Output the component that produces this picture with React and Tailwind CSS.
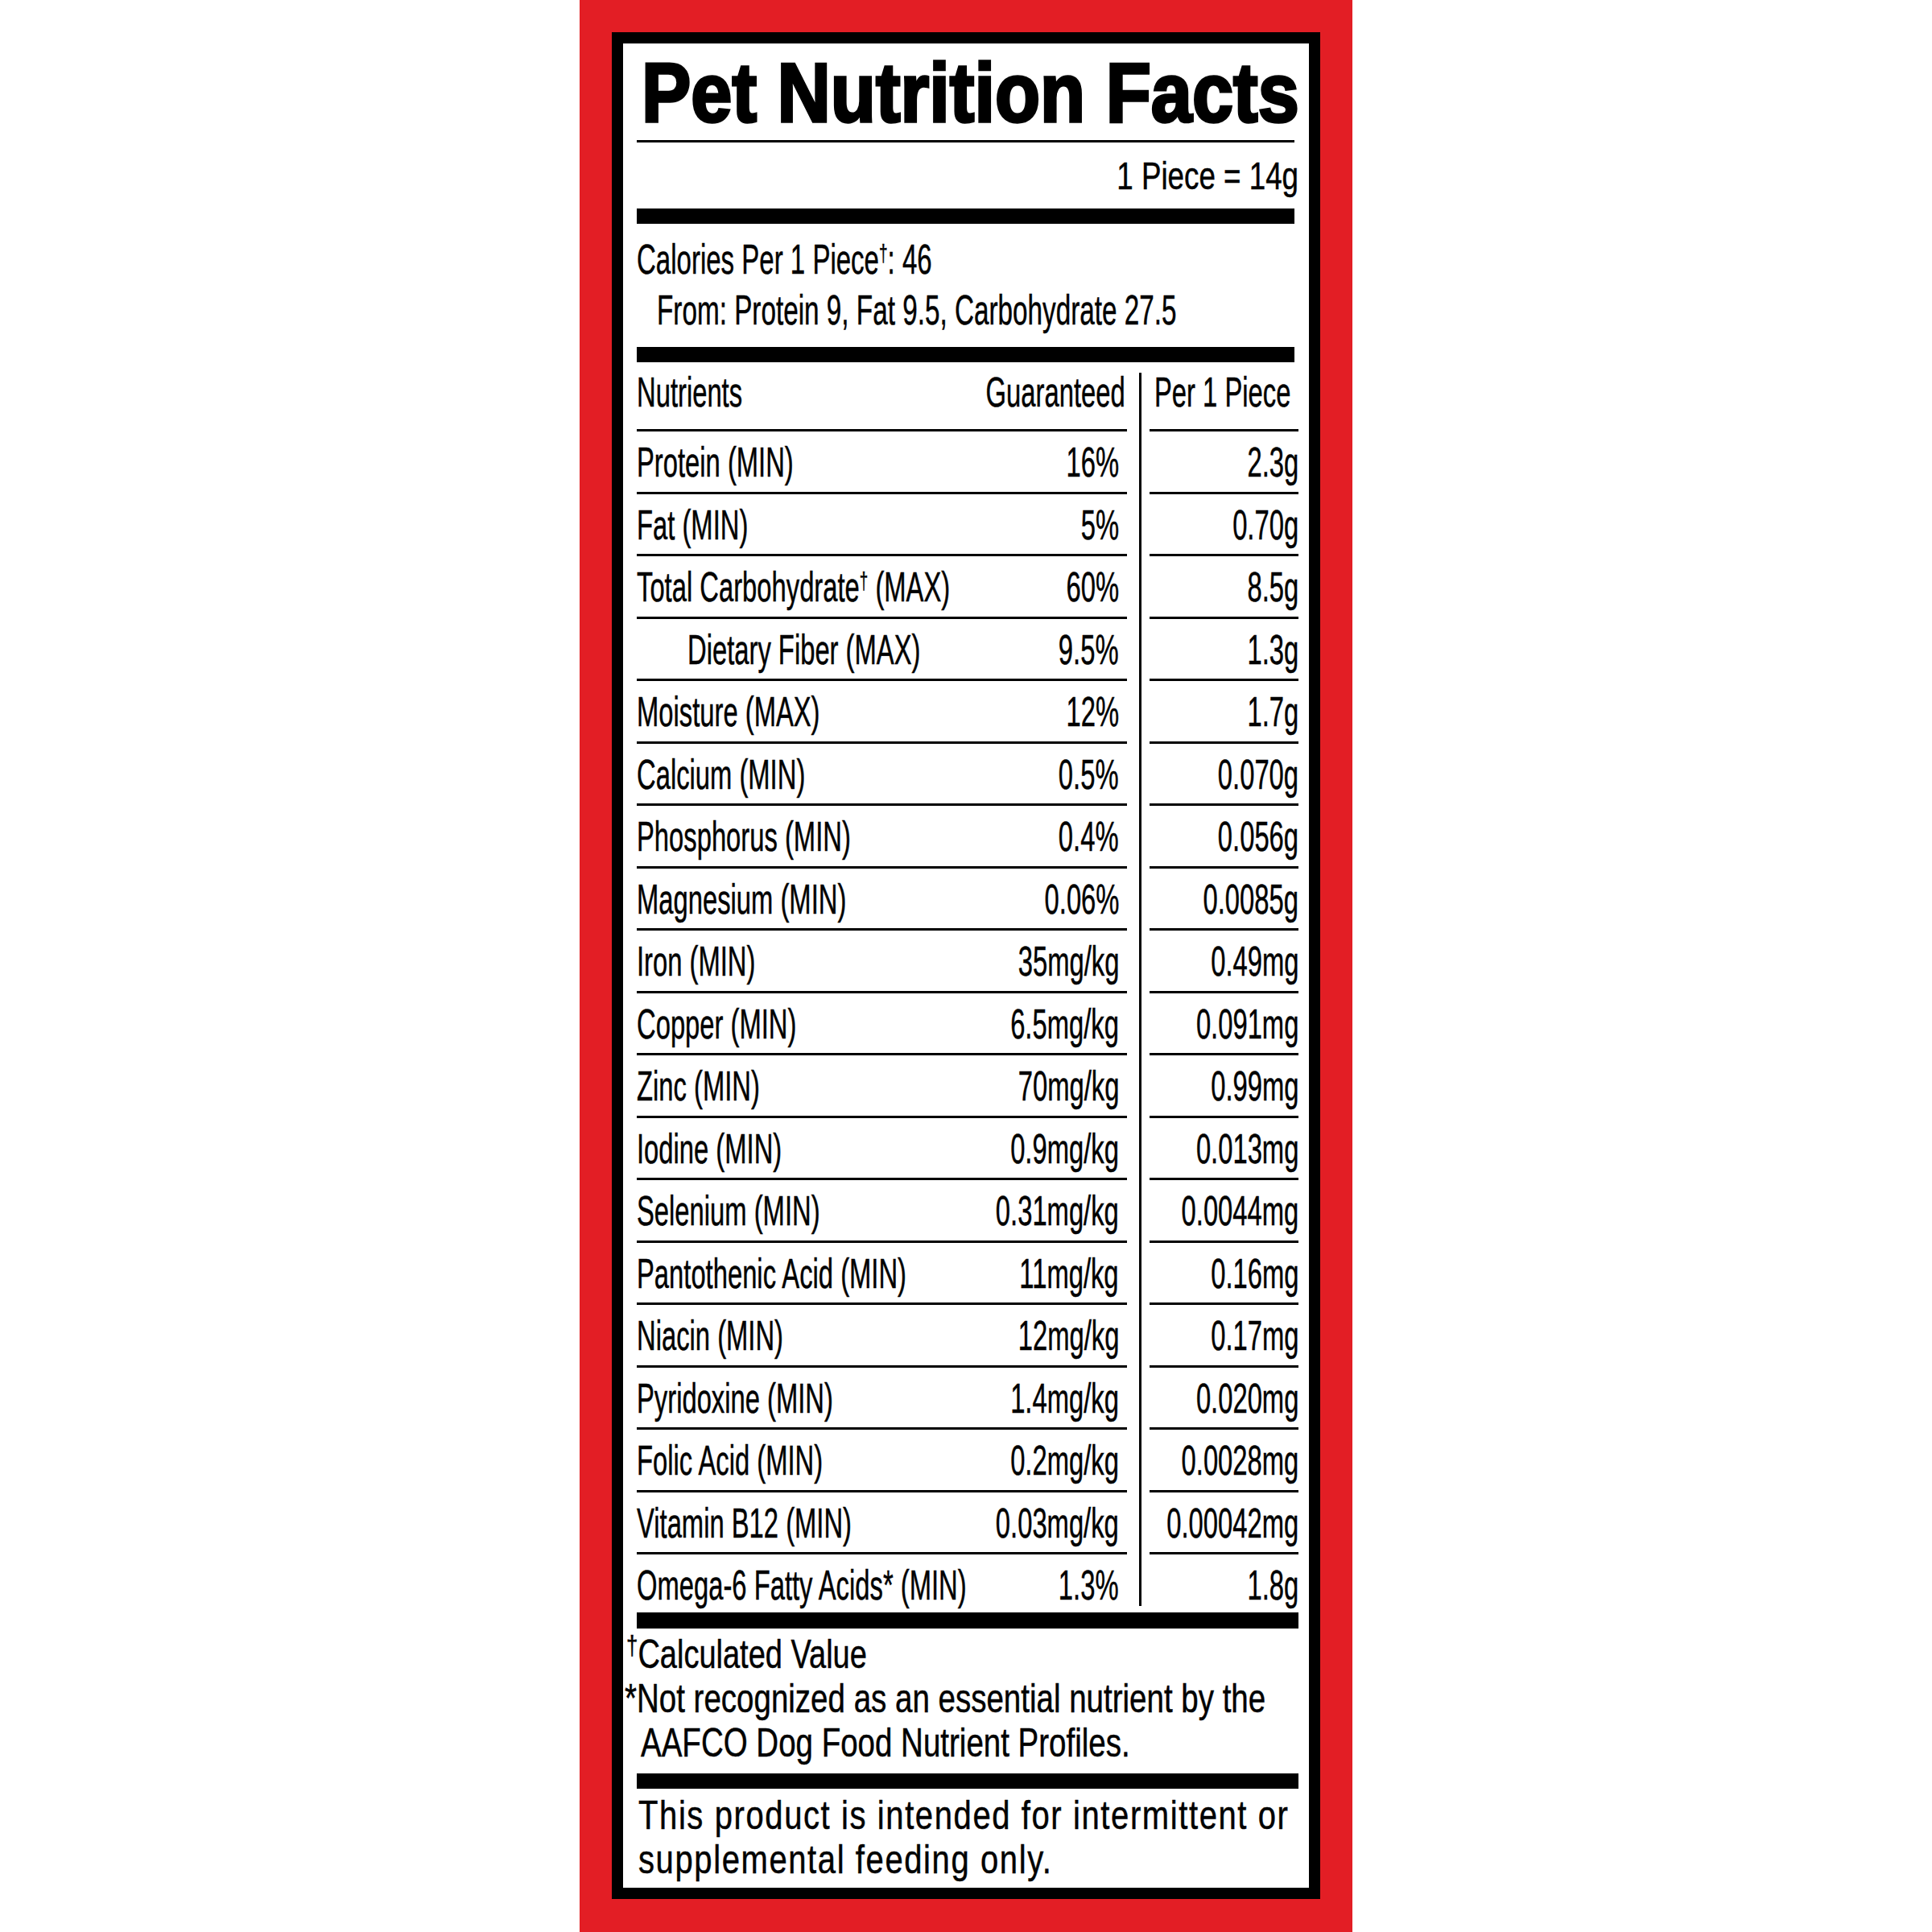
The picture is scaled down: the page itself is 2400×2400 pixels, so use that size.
import React from "react";

const rows = [
  ["Protein (MIN)", "16%", "2.3g"],
  ["Fat (MIN)", "5%", "0.70g"],
  ["Total Carbohydrate", "60%", "8.5g", "dagger"],
  ["Dietary Fiber (MAX)", "9.5%", "1.3g", "indent"],
  ["Moisture (MAX)", "12%", "1.7g"],
  ["Calcium (MIN)", "0.5%", "0.070g"],
  ["Phosphorus (MIN)", "0.4%", "0.056g"],
  ["Magnesium (MIN)", "0.06%", "0.0085g"],
  ["Iron (MIN)", "35mg/kg", "0.49mg"],
  ["Copper (MIN)", "6.5mg/kg", "0.091mg"],
  ["Zinc (MIN)", "70mg/kg", "0.99mg"],
  ["Iodine (MIN)", "0.9mg/kg", "0.013mg"],
  ["Selenium (MIN)", "0.31mg/kg", "0.0044mg"],
  ["Pantothenic Acid (MIN)", "11mg/kg", "0.16mg"],
  ["Niacin (MIN)", "12mg/kg", "0.17mg"],
  ["Pyridoxine (MIN)", "1.4mg/kg", "0.020mg"],
  ["Folic Acid (MIN)", "0.2mg/kg", "0.0028mg"],
  ["Vitamin B12 (MIN)", "0.03mg/kg", "0.00042mg"],
];

function Lt({ children }) {
  return (
    <span className="inline-block whitespace-nowrap origin-left scale-x-[0.63] [-webkit-text-stroke:0.5px_black]">
      {children}
    </span>
  );
}

function Rt({ children }) {
  return (
    <span className="inline-block whitespace-nowrap origin-right scale-x-[0.63] [-webkit-text-stroke:0.5px_black]">
      {children}
    </span>
  );
}

function Label({ row }) {
  const [name, , , kind] = row;
  if (kind === "dagger") {
    return (
      <Lt>
        Total Carbohydrate<sup className="text-[30px]">†</sup> (MAX)
      </Lt>
    );
  }
  return <Lt>{name}</Lt>;
}

function DataRow({ row }) {
  const indent = row[3] === "indent";
  return (
    <div className="flex h-[77.5px]">
      <div className="w-[609px] flex flex-col">
        <div className="flex-1 flex pt-[12px] leading-[52px]">
          <div className={indent ? "flex-1 min-w-0 pl-[63px]" : "flex-1 min-w-0"}>
            <Label row={row} />
          </div>
          <div className="w-[230px] flex justify-end pr-[10px]">
            <Rt>{row[1]}</Rt>
          </div>
        </div>
        <div className="h-[3px] bg-black" />
      </div>
      <div className="w-[28px] pl-[15px] flex">
        <div className="w-[3px] h-full bg-black" />
      </div>
      <div className="w-[185px] flex flex-col">
        <div className="flex-1 flex justify-end pt-[12px] leading-[52px]">
          <Rt>{row[2]}</Rt>
        </div>
        <div className="h-[3px] bg-black" />
      </div>
    </div>
  );
}

export default function App() {
  return (
    <div className="w-full h-[2400px] bg-white flex justify-center font-['Liberation_Sans',Arial,sans-serif] text-black">
      <div className="w-[960px] h-[2400px] bg-[#e31e25] px-[40px] pt-[40px]">
        <div className="h-[2319px] border-[14px] border-black bg-white pl-[17px] pr-[13px]">
          {/* Title */}
          <div className="pt-[10px] pl-[6px] text-[103px] leading-[103px] font-bold">
            <span className="inline-block whitespace-nowrap origin-left scale-x-[0.892] [-webkit-text-stroke:3.5px_black]">
              Pet Nutrition Facts
            </span>
          </div>
          <div className="mt-[7px] mr-[5px] h-[3px] bg-black" />

          {/* Serving size */}
          <div className="mt-[16.5px] flex justify-end text-[49px] leading-[49px]">
            <span className="inline-block whitespace-nowrap origin-right scale-x-[0.75] [-webkit-text-stroke:0.5px_black]">
              1 Piece = 14g
            </span>
          </div>
          <div className="mt-[16.5px] mr-[5px] h-[19px] bg-black" />

          {/* Calories */}
          <div className="mt-[18px] text-[52px] leading-[52px]">
            <span className="inline-block whitespace-nowrap origin-left scale-x-[0.635] [-webkit-text-stroke:0.5px_black]">
              Calories Per 1 Piece<sup className="text-[30px]">†</sup>: 46
            </span>
          </div>
          <div className="mt-[11px] pl-[25px] text-[52px] leading-[52px]">
            <span className="inline-block whitespace-nowrap origin-left scale-x-[0.64] [-webkit-text-stroke:0.5px_black]">
              From: Protein 9, Fat 9.5, Carbohydrate 27.5
            </span>
          </div>
          <div className="mt-[20px] mr-[5px] h-[19px] bg-black" />

          {/* Table */}
          <div className="text-[52px]">
            <div className="flex h-[86px]">
              <div className="w-[609px] flex flex-col">
                <div className="flex-1 flex pt-[11px] leading-[52px]">
                  <div className="flex-1 min-w-0">
                    <Lt>Nutrients</Lt>
                  </div>
                  <div className="w-[300px] flex justify-end pr-[2px]">
                    <Rt>Guaranteed</Rt>
                  </div>
                </div>
                <div className="h-[3px] bg-black" />
              </div>
              <div className="w-[28px] pl-[15px] pt-[13px] flex">
                <div className="w-[3px] h-full bg-black" />
              </div>
              <div className="w-[185px] flex flex-col">
                <div className="flex-1 pt-[11px] pl-[6px] leading-[52px]">
                  <Lt>Per 1 Piece</Lt>
                </div>
                <div className="h-[3px] bg-black" />
              </div>
            </div>

            {rows.map((r) => (
              <DataRow key={r[0]} row={r} />
            ))}

            <div className="flex h-[72px]">
              <div className="w-[609px] flex pt-[12px] leading-[52px]">
                <div className="flex-1 min-w-0">
                  <Lt>Omega-6 Fatty Acids* (MIN)</Lt>
                </div>
                <div className="w-[150px] flex justify-end pr-[10px]">
                  <Rt>1.3%</Rt>
                </div>
              </div>
              <div className="w-[28px] pl-[15px] flex items-start">
                <div className="w-[3px] h-[64px] bg-black" />
              </div>
              <div className="w-[185px] flex justify-end pt-[12px] leading-[52px]">
                <Rt>1.8g</Rt>
              </div>
            </div>
          </div>
          <div className="h-[20px] bg-black" />

          {/* Footnotes */}
          <div className="mt-[5px] text-[50px] leading-[55px]">
            <div className="-ml-[13px]">
              <span className="inline-block whitespace-nowrap origin-left scale-x-[0.76] [-webkit-text-stroke:0.5px_black]">
                <sup className="text-[34px]">†</sup>Calculated Value
              </span>
            </div>
            <div className="-ml-[15px]">
              <span className="inline-block whitespace-nowrap origin-left scale-x-[0.77] [-webkit-text-stroke:0.5px_black]">
                *Not recognized as an essential nutrient by the
              </span>
            </div>
            <div className="ml-[5px]">
              <span className="inline-block whitespace-nowrap origin-left scale-x-[0.77] [-webkit-text-stroke:0.5px_black]">
                AAFCO Dog Food Nutrient Profiles.
              </span>
            </div>
          </div>
          <div className="mt-[10px] h-[19px] bg-black" />

          {/* Feeding statement */}
          <div className="mt-[6px] pl-[2px] text-[50px] leading-[55px] tracking-[2px]">
            <div>
              <span className="inline-block whitespace-nowrap origin-left scale-x-[0.8] [-webkit-text-stroke:0.5px_black]">
                This product is intended for intermittent or
              </span>
            </div>
            <div>
              <span className="inline-block whitespace-nowrap origin-left scale-x-[0.8] [-webkit-text-stroke:0.5px_black]">
                supplemental feeding only.
              </span>
            </div>
          </div>
        </div>
      </div>
    </div>
  );
}
